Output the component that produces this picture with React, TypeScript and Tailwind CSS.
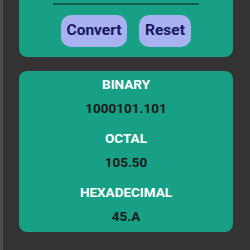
import React from "react";

export default function App() {
  const rows = [
    { label: "BINARY", value: "1000101.101" },
    { label: "OCTAL", value: "105.50" },
    { label: "HEXADECIMAL", value: "45.A" },
  ];
  return (
    <div
      className="w-[250px] h-[250px] overflow-hidden bg-[#333333] flex"
      style={{ fontFamily: "Roboto, 'Liberation Sans', sans-serif" }}
    >
      <div className="w-[3px] h-full bg-[#4d4d4d] shrink-0" />
      <div className="flex flex-col pl-[16px] pr-[17px] w-full">
        <div className="mt-[-40px] bg-[#17a085] rounded-[8px] pt-[43px] pb-[10px] flex flex-col items-center">
          <div className="w-[146px] h-[2px] bg-[#0d5c4c]" />
          <div className="flex gap-[12px] mt-[10px]">
            <button className="h-[32px] w-[66px] rounded-[10px] bg-[#a8b2f0] text-[#17175e] font-bold text-[15.5px]">
              Convert
            </button>
            <button className="h-[32px] w-[52px] rounded-[10px] bg-[#a8b2f0] text-[#17175e] font-bold text-[15.5px]">
              Reset
            </button>
          </div>
        </div>
        <div className="mt-[14px] bg-[#17a085] rounded-[8px] pt-[3px] pb-[6px] flex flex-col items-center">
          {rows.map((r, i) => (
            <div
              key={r.label}
              className={"flex flex-col items-center " + (i > 0 ? "mt-[10px]" : "")}
            >
              <div className="text-white font-bold text-[13.5px] leading-[20px]">{r.label}</div>
              <div className="mt-[4px] text-[#1a1a1a] font-bold text-[13.5px] leading-[20px]">
                {r.value}
              </div>
            </div>
          ))}
        </div>
      </div>
    </div>
  );
}
